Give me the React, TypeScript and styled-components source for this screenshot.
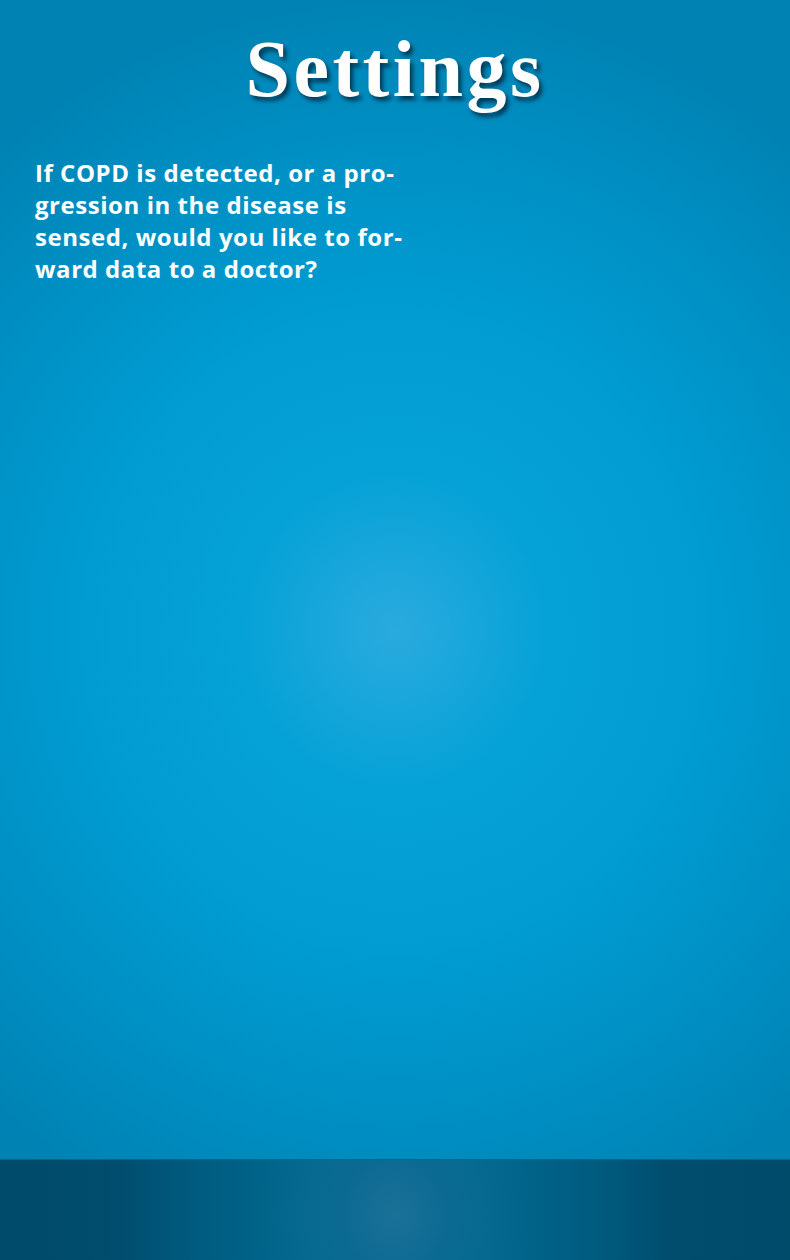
import React from "react";
import styled, { createGlobalStyle } from "styled-components";

const Global = createGlobalStyle`
  html, body { margin: 0; padding: 0; }
  body { width: 790px; height: 1260px; overflow: hidden; }
`;

const Screen = styled.div`
  width: 790px;
  height: 1260px;
  display: flex;
  flex-direction: column;
  background: radial-gradient(ellipse 620px 640px at 395px 630px, #2aaade 0%, #05a2d7 25%, #009cd2 50%, #0090c4 75%, #0082b3 100%);
  background-color: #0082b3;
`;

const Main = styled.main`
  flex: 1;
  display: flex;
  flex-direction: column;
`;

const Title = styled.h1`
  margin: 24px 0 0;
  text-align: center;
  font-family: "Liberation Serif", "DejaVu Serif", serif;
  font-weight: 700;
  font-size: 80px;
  line-height: 90px;
  color: #ffffff;
  letter-spacing: 3.5px;
  text-shadow: 3px 4px 4px rgba(0, 30, 50, 0.75);
`;

const Question = styled.p`
  margin: 43px 0 0 35px;
  font-family: "Open Sans", Lato, sans-serif;
  font-weight: 700;
  font-size: 24px;
  line-height: 32px;
  color: #ffffff;
  letter-spacing: 0.55px;
`;

const Footer = styled.footer`
  height: 100px;
  border-top: 1px solid #03678d;
  background: radial-gradient(ellipse 140px 160px at 395px 55px, #1b7198 0%, #0b6a92 40%, transparent 100%),
    linear-gradient(to right, #004a6a 0%, #004d6e 15%, #005c80 25%, #006a8f 40%, #006c92 50%, #006a8f 60%, #005c80 75%, #004d6e 85%, #004a6a 100%);
`;

export default function App() {
  return (
    <>
      <Global />
      <Screen>
        <Main>
          <Title>Settings</Title>
          <Question>
            If COPD is detected, or a pro-
            <br />
            gression in the disease is
            <br />
            sensed, would you like to for-
            <br />
            ward data to a doctor?
          </Question>
        </Main>
        <Footer />
      </Screen>
    </>
  );
}
